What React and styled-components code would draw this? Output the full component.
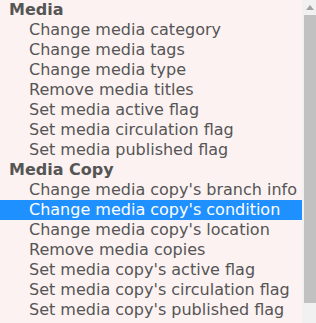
import React from "react";
import styled, { createGlobalStyle } from "styled-components";

const Global = createGlobalStyle`
  html, body { margin: 0; padding: 0; background: #fcf2f2; }
`;

const Frame = styled.div`
  width: 316px;
  height: 323px;
  display: flex;
  overflow: hidden;
  background: #fcf2f2;
  font-family: "DejaVu Sans", Verdana, sans-serif;
  font-size: 16px;
`;

const List = styled.div`
  flex: 1;
  display: flex;
  flex-direction: column;
`;

const Group = styled.div`
  height: 20px;
  line-height: 19px;
  padding-left: 9px;
  font-weight: bold;
  color: #555;
  white-space: nowrap;
`;

const Option = styled.div`
  height: 20px;
  line-height: 19px;
  padding-left: 29px;
  color: ${(p) => (p.$selected ? "#fff" : "#555")};
  background: ${(p) => (p.$selected ? "#1e90ff" : "transparent")};
  white-space: nowrap;
`;

const Scrollbar = styled.div`
  width: 14px;
  flex: none;
  background: #f1f1f1;
  display: flex;
  flex-direction: column;
  align-items: flex-end;
`;

const Arrow = styled.div`
  height: 15px;
  width: 14px;
  display: flex;
  align-items: center;
  justify-content: center;
  padding-left: 1px;
  box-sizing: border-box;
`;

const Thumb = styled.div`
  width: 12px;
  height: 288px;
  background: #c1c1c1;
`;

const groups = [
  {
    label: "Media",
    options: [
      "Change media category",
      "Change media tags",
      "Change media type",
      "Remove media titles",
      "Set media active flag",
      "Set media circulation flag",
      "Set media published flag",
    ],
  },
  {
    label: "Media Copy",
    options: [
      "Change media copy's branch info",
      "Change media copy's condition",
      "Change media copy's location",
      "Remove media copies",
      "Set media copy's active flag",
      "Set media copy's circulation flag",
      "Set media copy's published flag",
    ],
  },
];

export default function App() {
  return (
    <>
      <Global />
      <Frame>
        <List>
          {groups.map((g) => (
            <React.Fragment key={g.label}>
              <Group>{g.label}</Group>
              {g.options.map((o) => (
                <Option key={o} $selected={o === "Change media copy's condition"}>
                  {o}
                </Option>
              ))}
            </React.Fragment>
          ))}
        </List>
        <Scrollbar>
          <Arrow>
            <svg width="8" height="5" viewBox="0 0 8 5">
              <polygon points="4,0 8,5 0,5" fill="#a3a3a3" />
            </svg>
          </Arrow>
          <Thumb />
        </Scrollbar>
      </Frame>
    </>
  );
}
